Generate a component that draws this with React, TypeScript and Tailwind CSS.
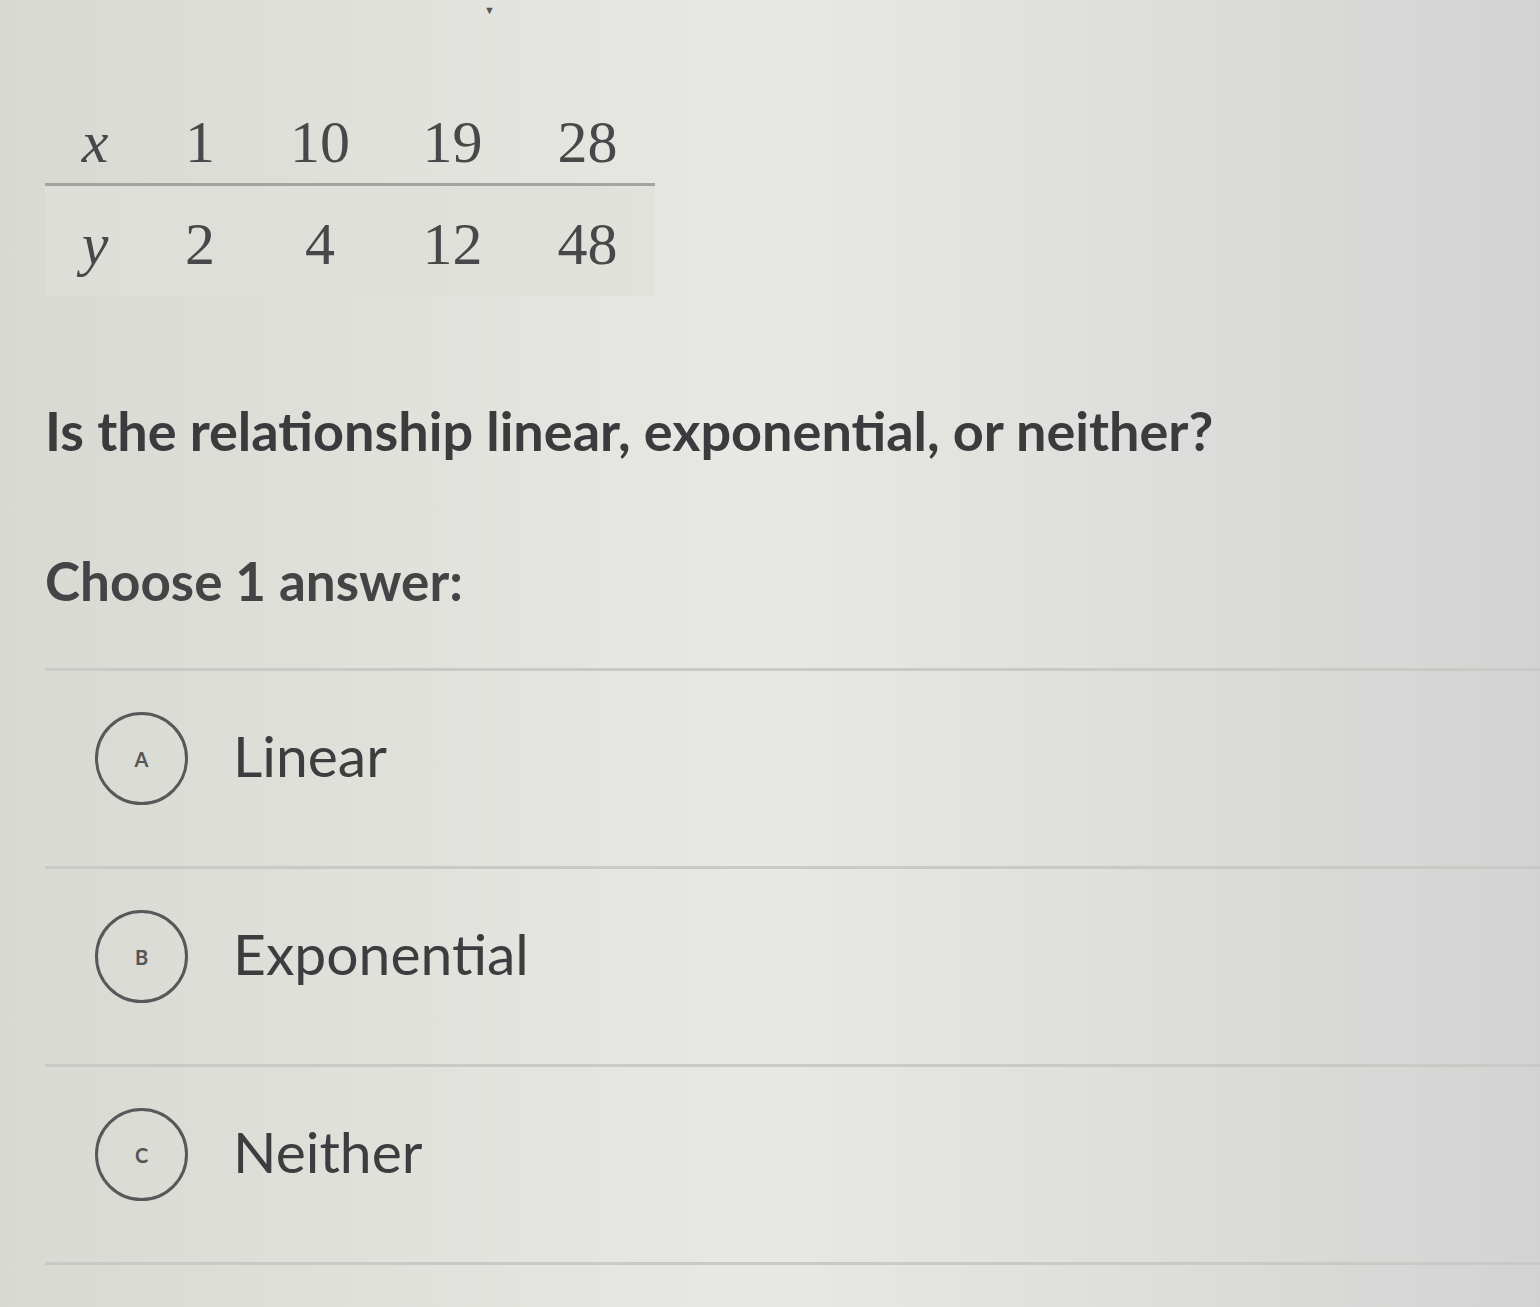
import React from "react";

const xs = ["1", "10", "19", "28"];
const ys = ["2", "4", "12", "48"];
const colW = ["w-[110px]", "w-[130px]", "w-[135px]", "w-[135px]"];

const options = [
  { letter: "A", label: "Linear" },
  { letter: "B", label: "Exponential" },
  { letter: "C", label: "Neither" },
];

const App = () => {
  return (
    <div className="relative min-h-[1307px] w-full overflow-hidden bg-linear-to-r from-[#d9d9d3] via-[#e8e9e4] to-[#d3d3d3] text-[#3d3d3f]">
      {/* little caret at the top edge */}
      <div className="absolute left-[484px] top-[4px] text-[11px] leading-none text-[#555]">▼</div>

      <div className="pl-[45px] pt-[95px]">
        {/* data table */}
        <div className="w-[610px] font-['Liberation_Serif',serif] text-[60px] leading-none text-[#48484a]">
          <div className="flex h-[88px] items-center pt-[6px]">
            <div className="w-[100px] text-center italic">x</div>
            {xs.map((v, i) => (
              <div key={i} className={`${colW[i]} text-center`}>
                {v}
              </div>
            ))}
          </div>
          <div className="h-[3px] bg-[#a3a3a0]" />
          <div className="flex h-[110px] items-center bg-[#dedfd9]/70 pt-[6px]">
            <div className="w-[100px] text-center italic">y</div>
            {ys.map((v, i) => (
              <div key={i} className={`${colW[i]} text-center`}>
                {v}
              </div>
            ))}
          </div>
        </div>

        <p className="mt-[108px] font-['Lato',sans-serif] text-[54px] font-bold leading-none text-[#3b3b3e]">
          Is the relationship linear, exponential, or neither?
        </p>

        <p className="mt-[96px] font-['Lato',sans-serif] text-[53px] font-bold leading-none text-[#444446]">
          Choose 1 answer:
        </p>

        <div className="mt-[61px]">
          <div className="h-[3px] bg-[#c9cac6]" />
          {options.map((o) => (
            <div key={o.letter}>
              <div className="flex h-[195px] items-start pl-[50px] pt-[41px]">
                <div className="flex h-[93px] w-[93px] items-center justify-center rounded-full border-[3px] border-[#58585a] font-['Lato',sans-serif] text-[20px] font-bold text-[#555]">
                  {o.letter}
                </div>
                <span className="ml-[45px] mt-[15px] font-['Lato',sans-serif] text-[57px] leading-none text-[#3d3d40]">
                  {o.label}
                </span>
              </div>
              <div className="h-[3px] bg-[#c9cac6]" />
            </div>
          ))}
        </div>
      </div>
    </div>
  );
};

export default App;
